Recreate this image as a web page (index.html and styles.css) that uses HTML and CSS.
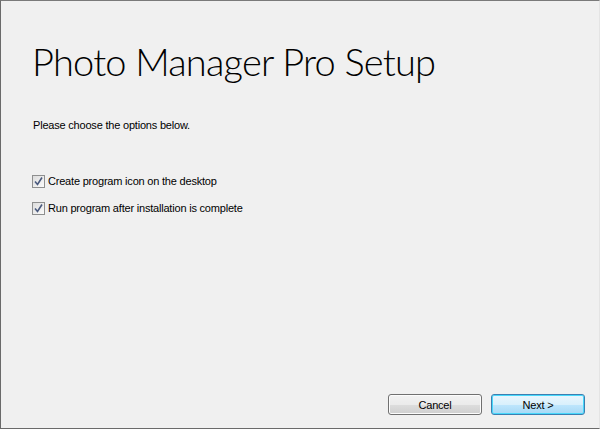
FILE: index.html
```html
<!DOCTYPE html>
<html>
<head>
<meta charset="utf-8">
<link rel="stylesheet" href="styles.css">
</head>
<body>
<div class="window">
  <div class="content">
    <h1 class="title">Photo Manager Pro Setup</h1>
    <p class="intro">Please choose the options below.</p>
    <div class="options">
      <label class="option"><span class="check"><svg width="9" height="9" viewBox="0 0 9 9"><path d="M1 4.5 L3.5 7.5 L8 0.5" fill="none" stroke="#4a5a7e" stroke-width="1.6"/></svg></span><span>Create program icon on the desktop</span></label>
      <label class="option"><span class="check"><svg width="9" height="9" viewBox="0 0 9 9"><path d="M1 4.5 L3.5 7.5 L8 0.5" fill="none" stroke="#4a5a7e" stroke-width="1.6"/></svg></span><span>Run program after installation is complete</span></label>
    </div>
  </div>
  <div class="buttons">
    <button class="btn">Cancel</button>
    <button class="btn default">Next &gt;</button>
  </div>
</div>
</body>
</html>
```
FILE: styles.css
```css
html, body {
  margin: 0;
  padding: 0;
  background: #f0f0f0;
}
.window {
  width: 600px;
  height: 429px;
  box-sizing: border-box;
  border-top: 1px solid #7a7a7a;
  border-left: 1px solid #6a6a6a;
  border-bottom: 1px solid #6a6a6a;
  border-right: 1px solid #e4e4e4;
  background: #f0f0f0;
  display: flex;
  flex-direction: column;
  font-family: "Liberation Sans", Arial, sans-serif;
  font-size: 11px;
  letter-spacing: -0.2px;
  color: #000;
}
.content {
  flex: 1;
  padding: 0 0 0 31px;
}
.title {
  margin: 34px 0 0 0;
  font-family: Lato, sans-serif;
  font-weight: 300;
  font-size: 38px;
  line-height: 52px;
  letter-spacing: -0.8px;
}
.intro {
  margin: 31px 0 0 1px;
  line-height: 14px;
}
.options {
  margin-top: 43px;
  display: flex;
  flex-direction: column;
  gap: 14px;
}
.option {
  display: flex;
  align-items: center;
  gap: 3px;
  height: 13px;
  line-height: 13px;
}
.check {
  width: 11px;
  height: 11px;
  border: 1px solid #8e8f8f;
  background: linear-gradient(135deg, #dcdcdc, #fbfbfb);
  display: flex;
  align-items: center;
  justify-content: center;
}
.buttons {
  display: flex;
  justify-content: flex-end;
  gap: 9px;
  padding: 0 14px 13px 0;
}
.btn {
  width: 94px;
  height: 21px;
  box-sizing: border-box;
  border: 1px solid #707070;
  border-radius: 3px;
  background: linear-gradient(#f2f2f2 0%, #ebebeb 50%, #dddddd 51%, #cfcfcf 100%);
  font-family: "Liberation Sans", Arial, sans-serif;
  font-size: 11px;
  letter-spacing: -0.2px;
  color: #000;
  padding: 0;
  box-shadow: inset 0 0 0 1px #fcfcfc;
}
.btn.default {
  border-color: #3c7fb1;
  background: linear-gradient(#eaf6fd 0%, #d9f0fc 50%, #bee6fd 51%, #a7d9f5 100%);
  box-shadow: inset 0 0 0 1px #48d8fb;
}
```
